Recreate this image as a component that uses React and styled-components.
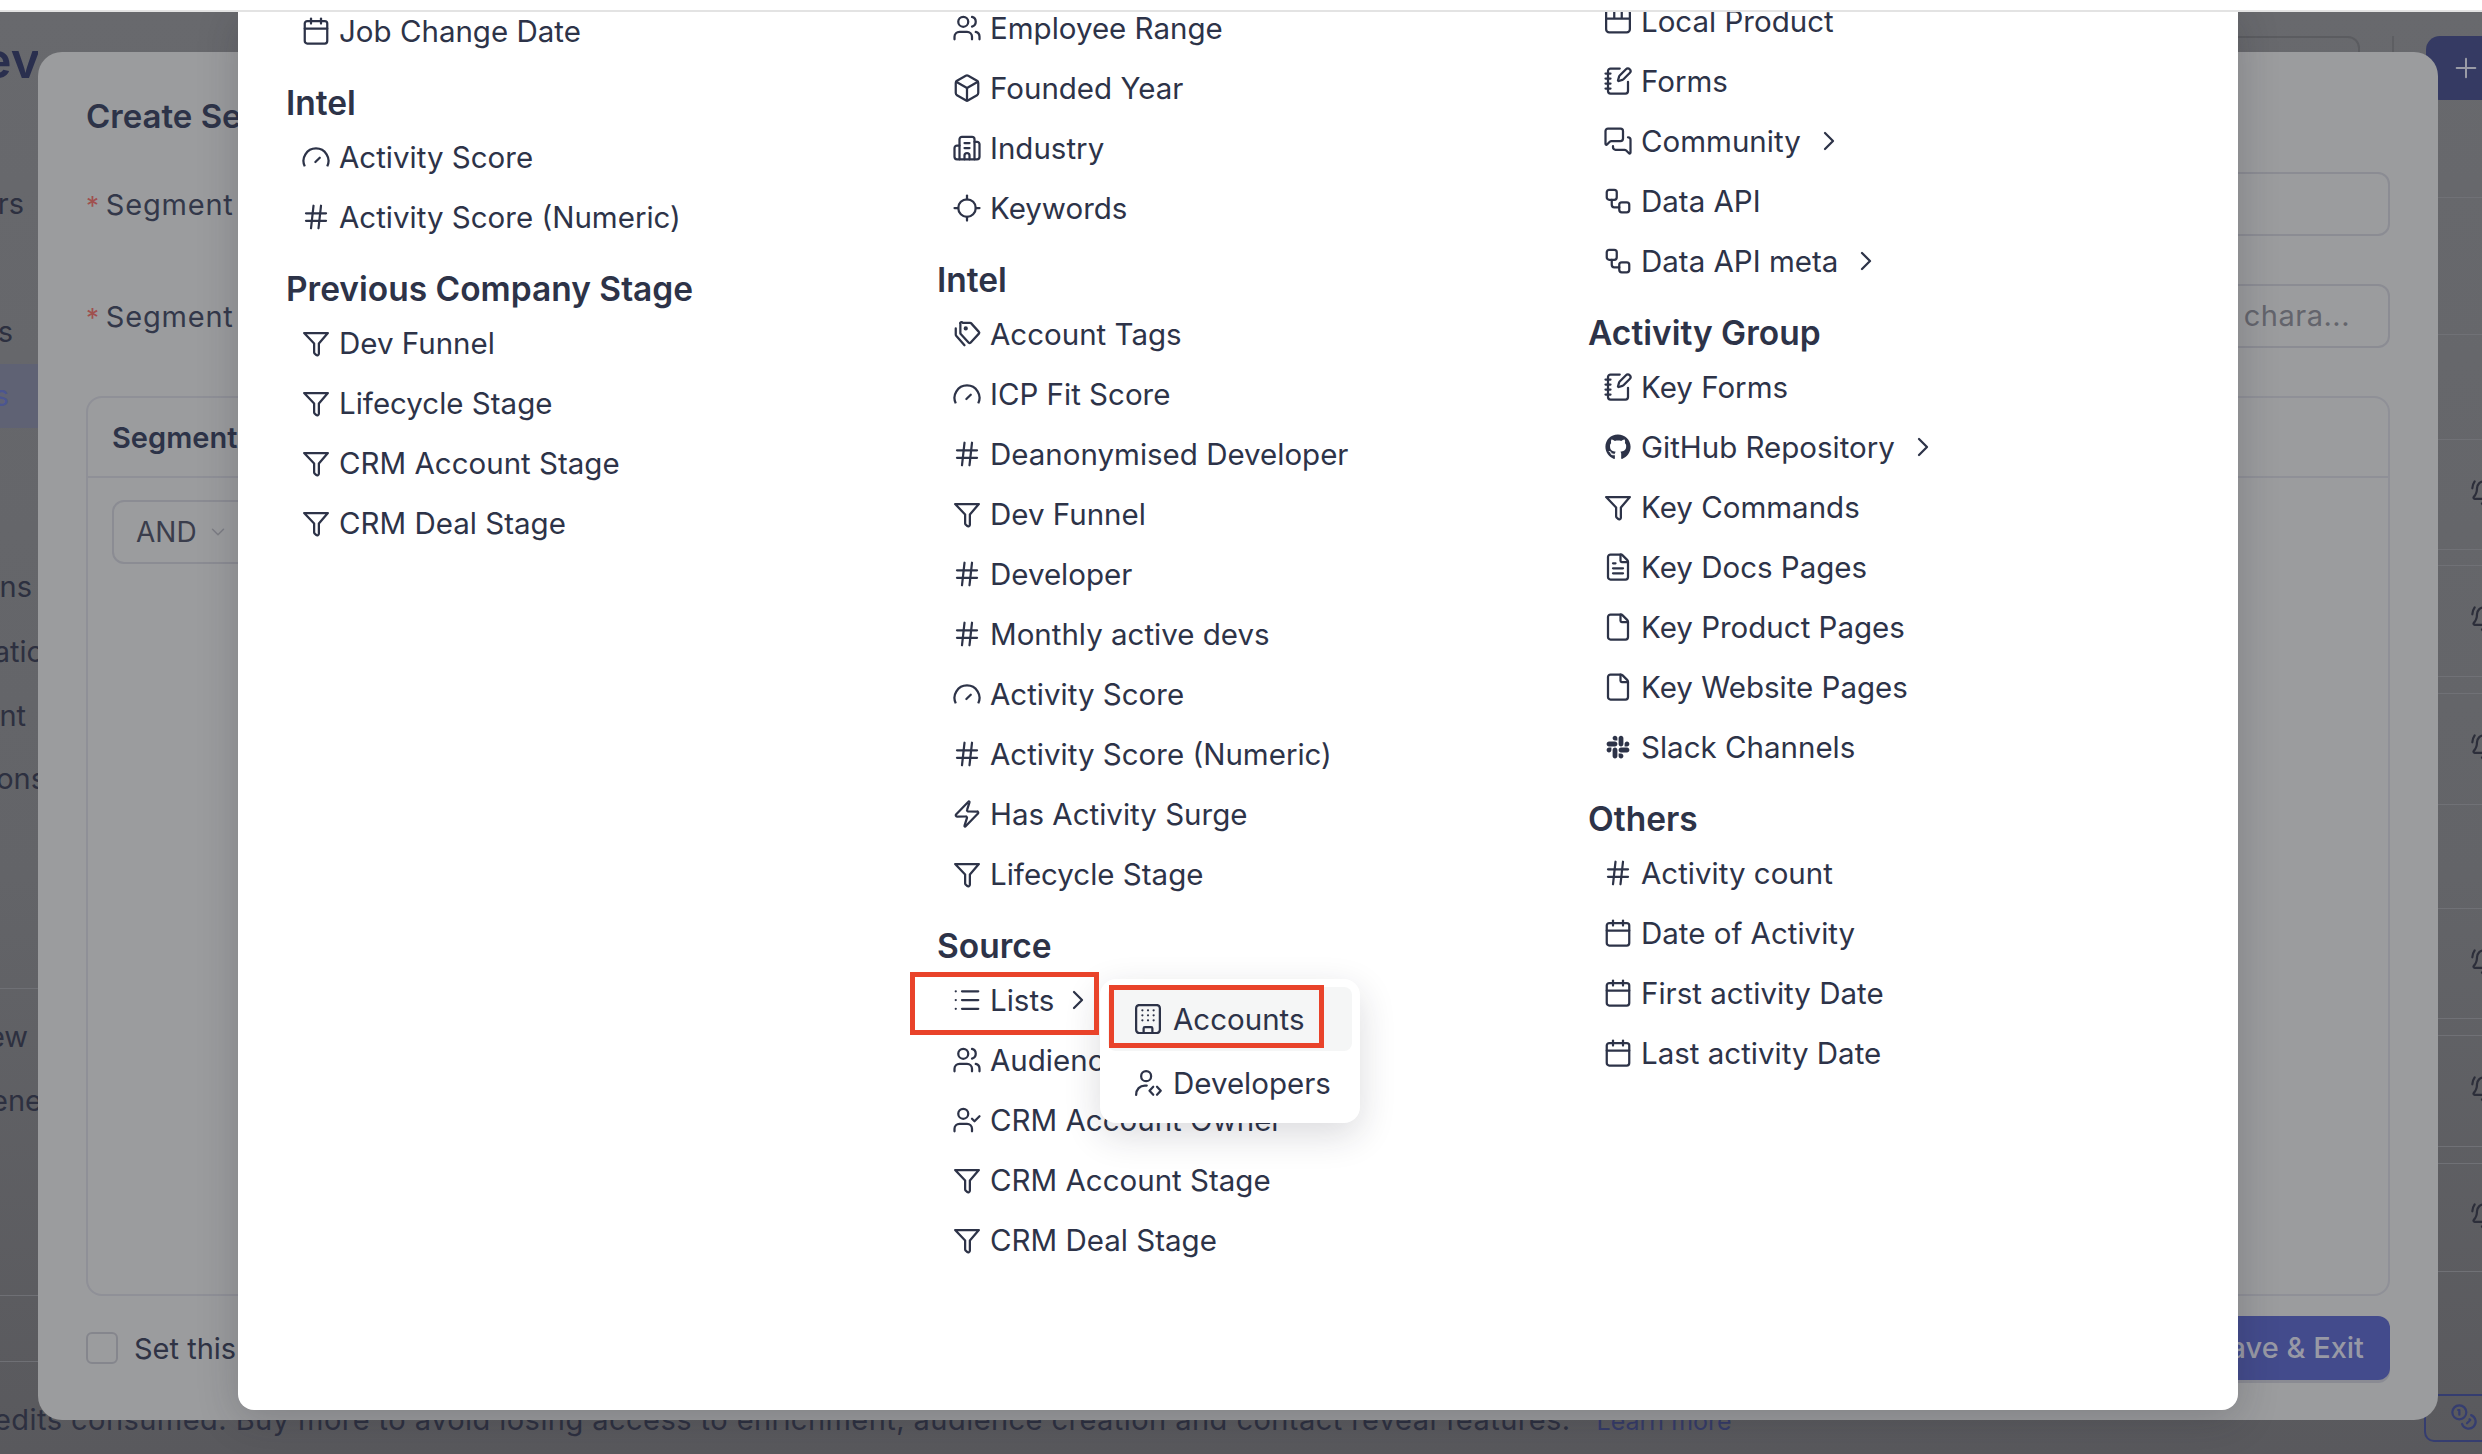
import React from 'react';
import styled, { createGlobalStyle } from 'styled-components';
import {
  Calendar, Hash, Users, Box, Building2, Locate, List, Zap, UserCheck, NotebookPen,
  MessagesSquare, Workflow, FileText, File, ChevronRight, ChevronDown, Plus, BellRing, Coins,
} from 'lucide-react';
import { FaGithub, FaSlack } from 'react-icons/fa';

const Global = createGlobalStyle`
  html, body { margin: 0; padding: 0; }
  body { font-family: "Inter", "Noto Sans", sans-serif; color: #2d3348; background: #fff; }
  * { box-sizing: border-box; }
`;

const ICON = { size: 30, strokeWidth: 1.8 };

const Gauge = () => (
  <svg width="30" height="30" viewBox="0 0 24 24" fill="none" stroke="currentColor" strokeWidth="1.8" strokeLinecap="butt">
    <path d="M3 19.5a10 10 0 1 1 18 0" />
    <path d="M11.5 16L15 12.6" strokeLinecap="round" />
  </svg>
);

const Funnel = () => (
  <svg width="30" height="30" viewBox="0 0 24 24" fill="none" stroke="currentColor" strokeWidth="1.8" strokeLinejoin="round" strokeLinecap="round">
    <path d="M2.5 4h19l-7.2 8.4V20.500a1.300 1.300 0 0 1-2.200 1l-1-.9a1.500 1.500 0 0 1-.6-1.100v-7.100z" />
  </svg>
);

const Tag = () => (
  <svg width="30" height="30" viewBox="0 0 24 24" fill="none" stroke="currentColor" strokeWidth="1.8" strokeLinejoin="round" strokeLinecap="round">
    <path d="M8.500 3h6a1 1 0 0 1 .7.3l6.300 7a1 1 0 0 1 0 1.400l-6.700 7.300a1 1 0 0 1-1.400 0l-6.400-7a1 1 0 0 1-.3-.7V4a1 1 0 0 1 1.800-1z" />
    <circle cx="11" cy="7.500" r="0.800" />
    <path d="M3 7.500v4.800a2 2 0 0 0 .5 1.300l6.500 7.400" />
  </svg>
);

const Parcel = () => (
  <svg width="30" height="30" viewBox="0 0 24 24" fill="none" stroke="currentColor" strokeWidth="1.8" strokeLinejoin="round">
    <rect x="2.500" y="3" width="19" height="18" rx="2.500" />
    <path d="M2.500 10h19M9 3v7M15 3v7" />
  </svg>
);

const Tower = () => (
  <svg width="30" height="30" viewBox="0 0 24 24" fill="none" stroke="currentColor" strokeWidth="1.8" strokeLinejoin="round">
    <rect x="2.500" y="0.800" width="19" height="22.400" rx="2.500" />
    <path d="M8.500 23v-3.500a1 1 0 0 1 1-1h5a1 1 0 0 1 1 1V23" />
    <g fill="currentColor" stroke="none">
      {[5, 9, 13].map(y => [7.500, 12, 16.500].map(x => <circle key={`${x}-${y}`} cx={x} cy={y} r="0.900" />))}
    </g>
  </svg>
);

const DevUser = () => (
  <svg width="30" height="30" viewBox="0 0 24 24" fill="none" stroke="currentColor" strokeWidth="1.8" strokeLinecap="round" strokeLinejoin="round">
    <circle cx="10.500" cy="6.500" r="4" />
    <path d="M2.500 21.500c0-4.400 3-7.500 7-7.500h1.500M16.200 15l-3 3.200 3 3.200M19.200 15l3 3.200-3 3.200" />
  </svg>
);

const glyphs = {
  calendar: <Calendar {...ICON} />,
  hash: <Hash {...ICON} />,
  users: <Users {...ICON} />,
  box: <Box {...ICON} />,
  industry: <Building2 {...ICON} />,
  locate: <Locate {...ICON} />,
  list: <List {...ICON} />,
  zap: <Zap {...ICON} />,
  owner: <UserCheck {...ICON} />,
  form: <NotebookPen {...ICON} />,
  chat: <MessagesSquare {...ICON} />,
  api: <Workflow {...ICON} />,
  doc: <FileText {...ICON} />,
  file: <File {...ICON} />,
  gauge: <Gauge />,
  funnel: <Funnel />,
  tag: <Tag />,
  parcel: <Parcel />,
  github: <FaGithub size={26} />,
  slack: <FaSlack size={26} />,
};

const columns = [
  {
    lead: 10,
    sections: [
      { items: [['calendar', 'Job Change Date']] },
      { title: 'Intel', items: [['gauge', 'Activity Score'], ['hash', 'Activity Score (Numeric)']] },
      {
        title: 'Previous Company Stage',
        items: [['funnel', 'Dev Funnel'], ['funnel', 'Lifecycle Stage'], ['funnel', 'CRM Account Stage'], ['funnel', 'CRM Deal Stage']],
      },
    ],
  },
  {
    lead: 7,
    sections: [
      { items: [['users', 'Employee Range'], ['box', 'Founded Year'], ['industry', 'Industry'], ['locate', 'Keywords']] },
      {
        title: 'Intel',
        items: [
          ['tag', 'Account Tags'], ['gauge', 'ICP Fit Score'], ['hash', 'Deanonymised Developer'], ['funnel', 'Dev Funnel'],
          ['hash', 'Developer'], ['hash', 'Monthly active devs'], ['gauge', 'Activity Score'], ['hash', 'Activity Score (Numeric)'],
          ['zap', 'Has Activity Surge'], ['funnel', 'Lifecycle Stage'],
        ],
      },
      {
        title: 'Source',
        items: [
          ['list', 'Lists', 'open'], ['users', 'Audiences'], ['owner', 'CRM Account Owner'],
          ['funnel', 'CRM Account Stage'], ['funnel', 'CRM Deal Stage'],
        ],
      },
    ],
  },
  {
    lead: 0,
    sections: [
      {
        items: [
          ['parcel', 'Local Product'], ['form', 'Forms'], ['chat', 'Community', 'more'], ['api', 'Data API'], ['api', 'Data API meta', 'more'],
        ],
      },
      {
        title: 'Activity Group',
        items: [
          ['form', 'Key Forms'], ['github', 'GitHub Repository', 'more'], ['funnel', 'Key Commands'], ['doc', 'Key Docs Pages'],
          ['file', 'Key Product Pages'], ['file', 'Key Website Pages'], ['slack', 'Slack Channels'],
        ],
      },
      {
        title: 'Others',
        items: [['hash', 'Activity count'], ['calendar', 'Date of Activity'], ['calendar', 'First activity Date'], ['calendar', 'Last activity Date']],
      },
    ],
  },
];

const leftLabels = [
  { text: 'ev', top: 40, end: -2, logo: true },
  { text: 'rs', top: 184, end: 14 },
  { text: 's', top: 312, end: 25 },
  { text: 's', top: 376, end: 29, active: true },
  { text: 'ns', top: 567, end: 6 },
  { text: 'atio', top: 632, end: -6 },
  { text: 'nt', top: 696, end: 12 },
  { text: 'ons', top: 759, end: -8 },
  { text: 'ew', top: 1017, end: 10 },
  { text: 'ene', top: 1081, end: -4 },
];

// right edge of the page behind the dialog: table rows, [height, has bell]
const railRows = [
  [98, false], [137, false], [105, false], [110, true], [16, false], [111, true], [17, false], [111, true],
  [104, false], [110, true], [17, false], [111, true], [17, false], [108, true],
];

const Screen = styled.div`
  width: 2482px;
  height: 1454px;
  display: flex;
  flex-direction: column;
  overflow: hidden;
  position: relative;
  background: #fff;
`;

const TopStrip = styled.div`
  height: 12px;
  flex: none;
  background: #fff;
  border-bottom: 2px solid #e3e3e3;
`;

const Stage = styled.div`
  flex: 1;
  display: flex;
  justify-content: space-between;
  position: relative;
  background: linear-gradient(180deg, #68696d 0%, #636468 60%, #59595d 100%);
  overflow: hidden;
`;

const LeftRail = styled.div`
  width: 38px;
  position: relative;
  overflow: hidden;
`;

const RailLabel = styled.div`
  position: absolute;
  right: ${p => p.$end}px;
  top: ${p => p.$top - 12}px;
  height: 40px;
  line-height: 40px;
  font-size: ${p => (p.$logo ? 50 : 29)}px;
  font-weight: ${p => (p.$logo ? 600 : 400)};
  color: ${p => (p.$logo ? '#2a2f4e' : p.$active ? '#4b5590' : '#2d3040')};
  white-space: nowrap;
`;

const ActiveBand = styled.div`
  position: absolute;
  left: 0;
  right: 0;
  top: 352px;
  height: 64px;
  background: #5f6274;
`;

const RailLine = styled.div`
  position: absolute;
  left: 0;
  right: 0;
  top: ${p => p.$top}px;
  height: 1px;
  background: #6f7075;
`;

const RightRail = styled.div`
  width: 44px;
  display: flex;
  flex-direction: column;
  align-items: flex-end;
  padding-top: 24px;
`;

const AddButton = styled.div`
  width: 56px;
  height: 64px;
  flex: none;
  background: #353a63;
  border-radius: 14px 0 0 14px;
  color: #9a9ba6;
  display: flex;
  align-items: center;
  padding-left: 24px;
`;

const RailRows = styled.div`
  width: 100%;
  flex: 1;
  display: flex;
  flex-direction: column;
`;

const RailRow = styled.div`
  height: ${p => p.$h}px;
  flex: none;
  border-bottom: 1px solid #707176;
  display: flex;
  align-items: center;
  color: #2c2e3a;
  overflow: hidden;
`;

const RailBell = styled.span`
  display: block;
  margin-left: 32px;
  flex: none;
`;

const CoinBox = styled.div`
  position: absolute;
  left: 2424px;
  top: 1382px;
  width: 80px;
  height: 48px;
  border: 2px solid #353d70;
  border-radius: 10px;
  color: #353d70;
  padding: 7px 0 0 24px;
`;

const BannerText = styled.div`
  position: absolute;
  left: -6px;
  bottom: 14px;
  height: 40px;
  line-height: 40px;
  font-size: 29px;
  letter-spacing: 0.45px;
  color: #2d3040;
  white-space: nowrap;
`;

const BannerLink = styled.span`
  color: #353b68;
  font-size: 25px;
  letter-spacing: 0;
  margin-left: 26px;
`;

const GhostBar = styled.div`
  position: absolute;
  top: 24px;
  left: 2050px;
  width: 310px;
  height: 60px;
  border: 2px solid #5b5c60;
  border-radius: 12px;
`;

const GhostDivider = styled.div`
  position: absolute;
  top: 24px;
  left: 2392px;
  width: 2px;
  height: 50px;
  background: #5d5e62;
`;

const Modal = styled.div`
  position: absolute;
  left: 38px;
  top: 40px;
  width: 2400px;
  height: 1368px;
  background: #9b9c9e;
  border-radius: 24px;
  padding: 40px 48px 0 48px;
  display: flex;
  flex-direction: column;
  color: #2d3348;
`;

const ModalTitle = styled.div`
  font-size: 33px;
  font-weight: 600;
  line-height: 48px;
  color: #2d3348;
`;

const FieldRow = styled.div`
  display: flex;
  align-items: center;
  height: 64px;
  margin-top: ${p => p.$gap}px;
`;

const FieldLabel = styled.div`
  flex: 1;
  font-size: 29px;
  letter-spacing: 0.8px;
  color: #33384a;
  white-space: nowrap;
`;

const Required = styled.span`
  color: #a0504e;
  font-size: 26px;
  margin-right: 6px;
`;

const FieldInput = styled.div`
  width: 1500px;
  height: 64px;
  border: 2px solid #8b8c93;
  border-radius: 12px;
  font-size: 29px;
  letter-spacing: 0.5px;
  line-height: 60px;
  color: #63646c;
  text-align: right;
  padding-right: 38px;
  white-space: nowrap;
`;

const Builder = styled.div`
  margin-top: 48px;
  height: 900px;
  border: 2px solid #8f9097;
  border-radius: 16px;
  display: flex;
  flex-direction: column;
`;

const BuilderHead = styled.div`
  height: 80px;
  flex: none;
  display: flex;
  align-items: center;
  padding-left: 24px;
  font-size: 29px;
  font-weight: 600;
  border-bottom: 2px solid #8f9097;
`;

const BuilderBody = styled.div`
  padding: 22px 24px;
`;

const AndSelect = styled.div`
  width: 160px;
  height: 64px;
  border: 2px solid #8b8c93;
  border-radius: 12px;
  display: flex;
  align-items: center;
  gap: 10px;
  padding-left: 22px;
  font-size: 28px;
  color: #3a3d4c;
`;

const ModalFoot = styled.div`
  display: flex;
  align-items: center;
  justify-content: space-between;
  margin-top: 20px;
  height: 64px;
`;

const CheckLabel = styled.label`
  display: flex;
  align-items: center;
  gap: 16px;
  font-size: 29px;
  color: #2f3345;
`;

const CheckBox = styled.span`
  width: 32px;
  height: 32px;
  border: 2px solid #85868d;
  border-radius: 6px;
`;

const SaveButton = styled.div`
  width: 220px;
  height: 64px;
  background: #434b8c;
  border-radius: 12px;
  color: #9899a5;
  font-size: 29px;
  font-weight: 500;
  line-height: 64px;
  text-align: right;
  padding-right: 26px;
  box-shadow: 0 3px 0 #8a8b93;
`;

const PickerPanel = styled.div`
  position: absolute;
  left: 238px;
  top: -2px;
  width: 2000px;
  height: 1400px;
  background: #fff;
  border-radius: 0 0 16px 16px;
  box-shadow: 0 8px 40px rgba(30, 30, 40, 0.22);
  overflow: hidden;
`;

const PickerGrid = styled.div`
  display: grid;
  grid-template-columns: repeat(3, 651px);
  padding-left: 48px;
  margin-top: -19px;
`;

const PickerColumn = styled.div`
  padding-top: ${p => p.$lead}px;
`;

const Section = styled.section`
  margin-top: ${p => (p.$first ? 0 : 18)}px;
`;

const SectionTitle = styled.h3`
  margin: 0;
  height: 48px;
  line-height: 48px;
  font-size: 33.5px;
  font-weight: 600;
  color: #2d3348;
  white-space: nowrap;
`;

const Item = styled.div`
  height: 60px;
  display: flex;
  align-items: center;
  padding-left: 15px;
  gap: 8px;
  font-size: 29.5px;
  color: #2d3348;
  white-space: nowrap;
  position: relative;
`;

const IconSlot = styled.span`
  width: 30px;
  height: 30px;
  flex: none;
  display: flex;
  align-items: center;
  justify-content: center;
`;

const Chevron = styled.span`
  display: flex;
  flex: none;
  margin-left: ${p => (p.$open ? 0 : 4)}px;
`;

const Callout = styled.div`
  position: absolute;
  border: 5px solid #e9432a;
  pointer-events: none;
  z-index: 3;
`;

const ListsCallout = styled(Callout)`
  left: -27px;
  top: 2px;
  width: 189px;
  height: 63px;
`;

const AccountsCallout = styled(Callout)`
  left: 9px;
  top: 6px;
  width: 215px;
  height: 63px;
`;

const Flyout = styled.div`
  position: absolute;
  left: 163px;
  top: 9px;
  width: 260px;
  height: 144px;
  padding: 8px;
  background: #fff;
  border-radius: 16px;
  box-shadow: 0 12px 36px rgba(30, 34, 50, 0.16);
  z-index: 2;
`;

const FlyoutItem = styled.div`
  height: 64px;
  display: flex;
  align-items: center;
  gap: 10px;
  padding-left: 25px;
  border-radius: 8px;
  font-size: 29.5px;
  background: ${p => (p.$hover ? '#f5f6f6' : 'transparent')};
`;

const Row = ({ icon, label, mark }) => (
  <Item>
    <IconSlot>{glyphs[icon]}</IconSlot>
    {label}
    {mark && <Chevron $open={mark === 'open'}><ChevronRight size={32} strokeWidth={1.7} /></Chevron>}
    {mark === 'open' && (
      <>
        <ListsCallout />
        <Flyout>
          <AccountsCallout />
          <FlyoutItem $hover><Tower />Accounts</FlyoutItem>
          <FlyoutItem><DevUser />Developers</FlyoutItem>
        </Flyout>
      </>
    )}
  </Item>
);

const App = () => (
  <Screen>
    <Global />
    <TopStrip />
    <Stage>
      <LeftRail>
        <ActiveBand />
        <RailLine $top={976} />
        <RailLine $top={1283} />
        <RailLine $top={1349} />
        {leftLabels.map(l => (
          <RailLabel key={l.text + l.top} $top={l.top} $end={l.end} $logo={l.logo} $active={l.active}>{l.text}</RailLabel>
        ))}
      </LeftRail>
      <RightRail>
        <AddButton><Plus size={32} strokeWidth={1.5} /></AddButton>
        <RailRows>
          {railRows.map(([h, bell], i) => (
            <RailRow key={i} $h={h}>
              {bell && <RailBell><BellRing size={28} strokeWidth={1.9} /></RailBell>}
            </RailRow>
          ))}
        </RailRows>
      </RightRail>
      <GhostBar />
      <GhostDivider />
      <BannerText>
        edits consumed. Buy more to avoid losing access to enrichment, audience creation and contact reveal features.
        <BannerLink>Learn more</BannerLink>
      </BannerText>
      <CoinBox><Coins size={28} strokeWidth={1.9} /></CoinBox>
      <Modal>
        <ModalTitle>Create Segment</ModalTitle>
        <FieldRow $gap={32}>
          <FieldLabel><Required>*</Required>Segment Name</FieldLabel>
          <FieldInput />
        </FieldRow>
        <FieldRow $gap={48}>
          <FieldLabel><Required>*</Required>Segment Description</FieldLabel>
          <FieldInput>Describe in 100 chara...</FieldInput>
        </FieldRow>
        <Builder>
          <BuilderHead>Segment Filters</BuilderHead>
          <BuilderBody>
            <AndSelect>AND<ChevronDown size={22} strokeWidth={1.6} color="#7c7d84" /></AndSelect>
          </BuilderBody>
        </Builder>
        <ModalFoot>
          <CheckLabel><CheckBox />Set this as default</CheckLabel>
          <SaveButton>Save &amp; Exit</SaveButton>
        </ModalFoot>
      </Modal>
      <PickerPanel>
        <PickerGrid>
          {columns.map(col => (
            <PickerColumn key={col.lead} $lead={col.lead}>
              {col.sections.map((s, i) => (
                <Section key={i} $first={i === 0}>
                  {s.title && <SectionTitle>{s.title}</SectionTitle>}
                  {s.items.map(([icon, label, mark]) => (
                    <Row key={label} icon={icon} label={label} mark={mark} />
                  ))}
                </Section>
              ))}
            </PickerColumn>
          ))}
        </PickerGrid>
      </PickerPanel>
    </Stage>
  </Screen>
);

export default App;
